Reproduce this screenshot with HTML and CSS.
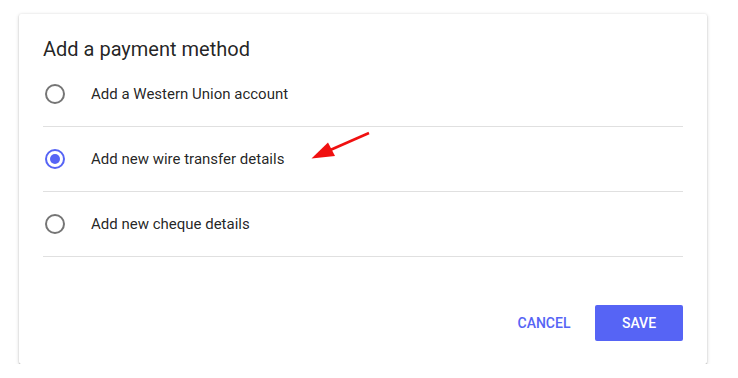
FILE: index.html
```html
<!DOCTYPE html>
<html lang="en">

<head>
    <meta charset="UTF-8">
    <meta name="viewport" content="width=device-width, initial-scale=1.0">
    <title>Add a payment method</title>
    <link rel="stylesheet" href="styles.css">
</head>

<body>
    <div class="dialog">
        <h2 class="dialog-title">Add a payment method</h2>

        <div class="options">
            <label class="option">
                <span class="radio"></span>
                <span class="option-label">Add a Western Union account</span>
            </label>
            <label class="option">
                <span class="radio checked"></span>
                <span class="option-label">Add new wire transfer details</span>
            </label>
            <label class="option">
                <span class="radio"></span>
                <span class="option-label">Add new cheque details</span>
            </label>
        </div>

        <div class="actions">
            <button class="btn btn-text">Cancel</button>
            <button class="btn btn-primary">Save</button>
        </div>

        <!-- annotation arrow pointing at the selected option -->
        <svg class="arrow" viewBox="280 110 100 60" width="100" height="60">
            <line x1="369" y1="133" x2="328" y2="151" stroke="#f01010" stroke-width="2.6" />
            <polygon points="311.5,158.5 328,142.5 335,156" fill="#f01010" />
        </svg>
    </div>
</body>

</html>
```

FILE: styles.css
```css
body {
    margin: 0;
    background-color: #fff;
    font-family: Roboto, "Liberation Sans", sans-serif;
    color: rgba(0, 0, 0, 0.87);
}

.dialog {
    position: relative;
    width: 688px;
    margin: 14px 0 0 19px;
    padding: 22px 24px 23px;
    box-sizing: border-box;
    background-color: #fff;
    border-radius: 2px;
    box-shadow: 0 1px 1px rgba(0, 0, 0, 0.28), 0 1px 4px rgba(0, 0, 0, 0.14), 0 0 2px rgba(0, 0, 0, 0.08);
}

.dialog-title {
    margin: 0;
    font-size: 20px;
    font-weight: 400;
    line-height: 26px;
    color: rgba(0, 0, 0, 0.87);
}

.options {
    display: flex;
    flex-direction: column;
}

.option {
    display: flex;
    align-items: center;
    height: 64px;
    border-bottom: 1px solid #e0e0e0;
    cursor: pointer;
}

.radio {
    width: 20px;
    height: 20px;
    margin-left: 2px;
    margin-right: 26px;
    box-sizing: border-box;
    border: 2px solid #757575;
    border-radius: 50%;
    display: flex;
    justify-content: center;
    align-items: center;
}

.radio.checked {
    border-color: #5664f5;
}

.radio.checked::after {
    content: "";
    width: 10px;
    height: 10px;
    border-radius: 50%;
    background-color: #5664f5;
}

.option-label {
    font-size: 15px;
    line-height: 20px;
}

.actions {
    display: flex;
    justify-content: flex-end;
    gap: 7px;
    margin-top: 48px;
}

.btn {
    height: 36px;
    min-width: 88px;
    padding: 0 16px;
    border: none;
    border-radius: 2px;
    font-family: inherit;
    font-size: 14px;
    font-weight: 500;
    text-transform: uppercase;
    cursor: pointer;
}

.btn-text {
    background: none;
    color: #5664f5;
}

.btn-primary {
    background-color: #5664f5;
    color: #fff;
}

.arrow {
    position: absolute;
    left: 261px;
    top: 96px;
    pointer-events: none;
}
```
